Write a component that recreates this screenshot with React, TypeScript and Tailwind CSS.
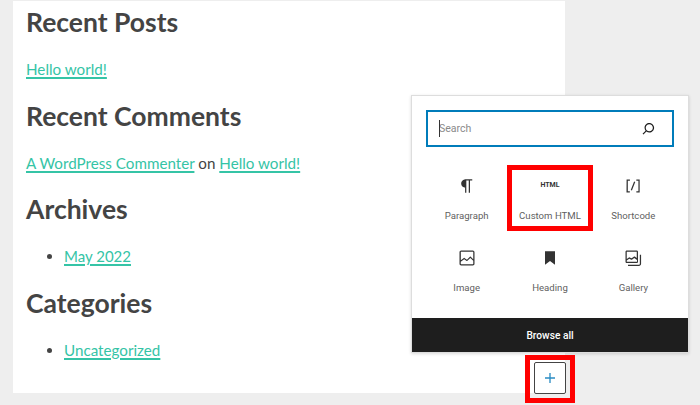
const blocks = [
  {
    label: 'Paragraph',
    icon: <path d="M18.3 4H9.9v-.1l-.9.2c-2.3.4-4 2.4-4 4.8s1.700 4.400 4 4.800l.7.1V20h1.500V5.500h2.900V20h1.500V5.500h2.700V4z" />,
  },
  { label: 'Custom HTML', icon: null },
  {
    label: 'Shortcode',
    icon: <path d="M16 4.200v1.500h2.500v12.500H16v1.500h4V4.200h-4zM4.200 19.800h4v-1.500H5.800V5.800h2.500V4.200h-4l-.1 15.600zm5.100-3.100l1.400.6 4-10-1.400-.6-4 10z" />,
  },
  {
    label: 'Image',
    icon: <path d="M19 3H5c-1.100 0-2 .9-2 2v14c0 1.100.9 2 2 2h14c1.100 0 2-.9 2-2V5c0-1.100-.9-2-2-2zM5 4.500h14c.3 0 .5.2.5.5v8.400l-3-2.900c-.3-.3-.8-.3-1 0L11.900 14 9 12c-.3-.2-.6-.2-.8 0l-3.600 2.600V5c-.1-.3.1-.5.4-.5zm14 15H5c-.3 0-.5-.2-.5-.5v-2.400l4.100-3 3 1.900c.3.2.7.2.9-.1L16 12l3.500 3.400V19c0 .3-.2.5-.5.5z" />,
  },
  { label: 'Heading', icon: <path d="M6 4v16l6-4.500 6 4.500V4z" /> },
  {
    label: 'Gallery',
    icon: (
      <>
        <path d="M20.200 8v11c0 .7-.6 1.200-1.200 1.200H6v1.500h13c1.500 0 2.700-1.200 2.700-2.700V8h-1.500z" />
        <path d="M16.400 3H4.600C3.700 3 3 3.700 3 4.600v11.800c0 .9.7 1.600 1.600 1.600h11.800c.9 0 1.600-.7 1.600-1.600V4.600c0-.9-.7-1.600-1.600-1.600zM4.600 4.500h11.800c.1 0 .1.1.1.1V12l-2.300-1.700c-.3-.2-.6-.2-.9 0l-2.900 2.100L8 11.300c-.3-.2-.7-.2-.9 0l-2.600 1.900V4.600c0-.1.1-.1.1-.1zm11.800 12H4.600c-.1 0-.1-.1-.1-.1v-1.300l3-2.200 2.400 1.200c.3.1.6.1.8-.1l2.800-2 3.300 2.400v2c0 .1-.1.1-.1.1z" />
      </>
    ),
  },
];

function Heading({ children }: { children: string }) {
  return <h2 className="h-[36px] text-[26.5px] leading-[36px] font-bold text-[#444444]">{children}</h2>;
}

function TextLink({ children }: { children: string }) {
  return <a className="text-[#35c4a6] underline decoration-[1.5px] underline-offset-2">{children}</a>;
}

export default function App() {
  return (
    <div className="relative h-[405px] w-[700px] overflow-hidden bg-[#eeeeee] pt-px pl-[13px] font-['Lato',sans-serif] text-[15.2px] text-[#444444]">
      <div className="flex h-[392px] w-[552px] flex-col bg-white pt-[3px] pl-[13px]">
        <section className="h-[93.5px] shrink-0">
          <Heading>Recent Posts</Heading>
          <p className="mt-[17px] leading-[24px]"><TextLink>Hello world!</TextLink></p>
        </section>
        <section className="h-[93.5px] shrink-0">
          <Heading>Recent Comments</Heading>
          <p className="mt-[17px] leading-[24px]">
            <TextLink>A WordPress Commenter</TextLink> on <TextLink>Hello world!</TextLink>
          </p>
        </section>
        <section className="h-[93.5px] shrink-0">
          <Heading>Archives</Heading>
          <ul className="mt-[17px] list-disc pl-[38px] text-[15px] leading-[24px]">
            <li><TextLink>May 2022</TextLink></li>
          </ul>
        </section>
        <section className="h-[93.5px] shrink-0">
          <Heading>Categories</Heading>
          <ul className="mt-[17px] list-disc pl-[38px] leading-[24px]">
            <li><TextLink>Uncategorized</TextLink></li>
          </ul>
        </section>
      </div>

      <div className="absolute top-[95px] left-[411px] flex h-[258px] w-[278px] flex-col border border-[#dddddd] bg-white font-['Roboto',sans-serif] shadow-[0_1px_3px_rgba(0,0,0,0.15)]">
        <div className="mx-[14px] mt-[14px] flex h-[37px] items-center justify-between border-2 border-[#007cba] pr-[14px] pl-[11px] text-[10.5px] text-[#8a8a8a]">
          <span className="relative pt-px">
            <span className="absolute top-0 left-0 h-full w-px bg-[#333333]" />
            Search
          </span>
          <svg viewBox="0 0 24 24" className="h-[19px] w-[19px] fill-[#1e1e1e]">
            <path d="M13 5c-3.300 0-6 2.700-6 6 0 1.400.5 2.700 1.300 3.700l-3.800 3.800 1.100 1.100 3.800-3.800c1 .8 2.300 1.300 3.700 1.300 3.300 0 6-2.700 6-6S16.300 5 13 5zm0 10.500c-2.500 0-4.500-2-4.500-4.500s2-4.500 4.500-4.500 4.500 2 4.500 4.500-2 4.500-4.500 4.500z" />
          </svg>
        </div>
        <div className="mx-[13px] mt-[27px] grid grid-cols-3">
          {blocks.map((block) => (
            <div key={block.label} className="flex h-[72px] flex-col items-center">
              <div className="flex h-[24px] w-[24px] items-center justify-center">
                {block.icon ? (
                  <svg viewBox="0 0 24 24" className="h-[20px] w-[20px] fill-[#333333]">{block.icon}</svg>
                ) : (
                  <span className="text-[7px] leading-none font-bold text-[#333333]">HTML</span>
                )}
              </div>
              <span className="mt-[11px] text-[9.6px] leading-[14px] text-[#5f5f5f]">{block.label}</span>
            </div>
          ))}
        </div>
        <div className="mt-auto flex h-[35px] items-center justify-center bg-[#1e1e1e] pt-[2px] text-[10.2px] font-medium text-white">
          Browse all
        </div>
      </div>

      <div className="absolute top-[165px] left-[507px] h-[66px] w-[86px] border-[5px] border-[#ff0000]" />
      <div className="absolute top-[355px] left-[525px] h-[48px] w-[50px] border-[5px] border-[#ff0000]" />
      <button className="absolute top-[362px] left-[534px] flex h-[32px] w-[32px] items-center justify-center rounded-[2px] border border-[#444444] bg-white">
        <svg viewBox="0 0 24 24" className="h-[20px] w-[20px] fill-[#2a8cc4]">
          <path d="M18 11.200h-5.200V6h-1.600v5.200H6v1.600h5.200V18h1.600v-5.200H18z" />
        </svg>
      </button>
    </div>
  );
}
